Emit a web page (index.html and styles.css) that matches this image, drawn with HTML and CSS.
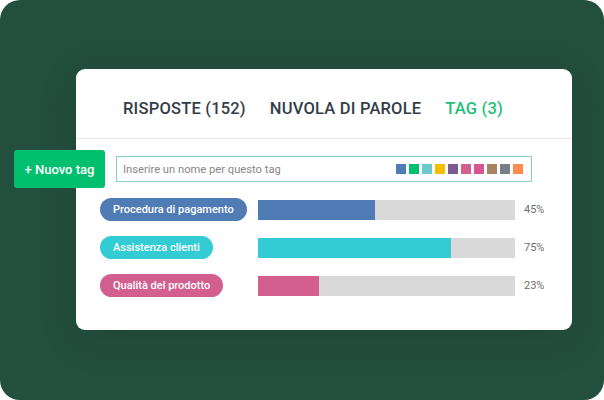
FILE: index.html
```html
<!DOCTYPE html>
<html lang="it">
<head>
<meta charset="utf-8">
<link rel="stylesheet" href="styles.css">
</head>
<body>
<div class="panel">
  <div class="card">
    <div class="tabs">
      <span class="tab">RISPOSTE (152)</span>
      <span class="tab">NUVOLA DI PAROLE</span>
      <span class="tab active">TAG (3)</span>
    </div>
    <div class="tools">
      <button class="new-tag">+ Nuovo tag</button>
      <div class="input">
        <span class="placeholder">Inserire un nome per questo tag</span>
        <div class="swatches">
          <span class="sw c1"></span><span class="sw c2"></span><span class="sw c3"></span><span class="sw c4"></span><span class="sw c5"></span><span class="sw c6"></span><span class="sw c7"></span><span class="sw c8"></span><span class="sw c9"></span><span class="sw c10"></span>
        </div>
      </div>
    </div>
    <div class="rows">
      <div class="pill blue">Procedura di pagamento</div>
      <div class="track"><div class="fill blue" style="width:45.5%"></div></div>
      <div class="pct">45%</div>

      <div class="pill cyan">Assistenza clienti</div>
      <div class="track"><div class="fill cyan" style="width:75%"></div></div>
      <div class="pct">75%</div>

      <div class="pill pink">Qualità del prodotto</div>
      <div class="track"><div class="fill pink" style="width:23.7%"></div></div>
      <div class="pct">23%</div>
    </div>
  </div>
</div>
</body>
</html>
```
FILE: styles.css
```css
* { box-sizing: border-box; }
html, body { margin: 0; padding: 0; background: #ffffff; }
body { font-family: Roboto, "Liberation Sans", sans-serif; }

.panel {
  width: 604px;
  height: 400px;
  background: #234f3e;
  border-radius: 20px;
  padding: 69px 32px 0 76px;
  overflow: hidden;
}

.card {
  width: 496px;
  height: 261px;
  background: #ffffff;
  border-radius: 9px;
  box-shadow: 0 8px 40px rgba(0, 0, 0, 0.12);
}

.tabs {
  height: 70px;
  border-bottom: 1px solid #e8e8e8;
  display: flex;
  gap: 24px;
  padding: 30px 0 0 47px;
}
.tab {
  font-size: 16.5px;
  font-weight: 500;
  color: #333e48;
  line-height: 20px;
  letter-spacing: 0.2px;
}
.tab.active { color: #1fbf77; }

.tools {
  display: flex;
  align-items: center;
  gap: 11px;
  margin: 11px 0 0 -62px;
}
.new-tag {
  width: 91px;
  height: 38px;
  border: 0;
  border-radius: 3px;
  background: #00bf6f;
  color: #ffffff;
  font-family: Roboto, "Liberation Sans", sans-serif;
  font-size: 13px;
  font-weight: 500;
  padding: 0;
}
.input {
  width: 416px;
  height: 26px;
  border: 1px solid #86d1c2;
  display: flex;
  align-items: center;
  justify-content: space-between;
  padding: 0 8px 0 6px;
}
.placeholder {
  font-size: 11.2px;
  color: #878787;
}
.swatches { display: flex; gap: 3px; }
.sw { width: 10px; height: 10px; display: block; }
.c1 { background: #507cb6; }
.c2 { background: #00bf6f; }
.c3 { background: #6bc8cd; }
.c4 { background: #f9be00; }
.c5 { background: #7d5a8f; }
.c6 { background: #d25f90; }
.c7 { background: #d7568f; }
.c8 { background: #a88363; }
.c9 { background: #768086; }
.c10 { background: #ff8b4f; }

.rows {
  display: grid;
  grid-template-columns: 158px 257px auto;
  row-gap: 15px;
  align-items: center;
  margin: 10px 0 0 24px;
}
.pill {
  justify-self: start;
  height: 23px;
  line-height: 23px;
  border-radius: 12px;
  padding: 0 13px;
  color: #ffffff;
  font-size: 11px;
  font-weight: 500;
}
.pill.blue { background: #507cb6; }
.pill.cyan { background: #33cbd4; }
.pill.pink { background: #d25f90; }

.track {
  height: 20px;
  background: #d9d9d9;
}
.fill { height: 20px; }
.fill.blue { background: #507cb6; }
.fill.cyan { background: #33cbd4; }
.fill.pink { background: #d25f90; }

.pct {
  padding-left: 9px;
  font-size: 11px;
  color: #6e6e6e;
}
```
